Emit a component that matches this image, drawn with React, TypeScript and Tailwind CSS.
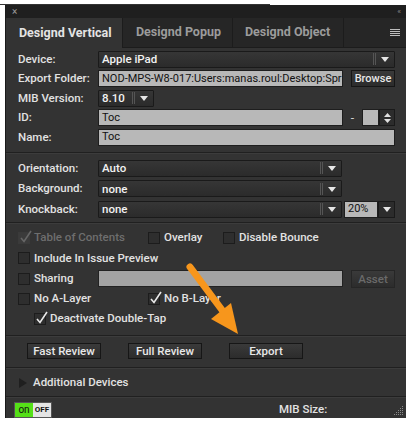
import React from 'react';

const font = { fontFamily: 'Roboto, "Liberation Sans", Arial, sans-serif' };

const Arrow: React.FC = () => (
    <svg width="10" height="8" viewBox="0 0 10 8" className="shrink-0">
        <path d="M1 2 L9 2 L5 7 Z" fill="#e6e6e6" />
    </svg>
);

const Select: React.FC<{ value: string; className?: string }> = ({ value, className = '' }) => (
    <div
        className={`flex items-center h-[17px] border border-[#1a1a1a] bg-gradient-to-b from-[#363636] to-[#2b2b2b] rounded-[1px] ${className}`}
    >
        <span className="flex-1 pl-[3px] text-[11.5px] font-medium text-[#f2f2f2] leading-[14px] truncate">{value}</span>
        <div className="flex items-center h-full pr-[4px]">
            <div className="w-[3px] h-[12px] border-l border-r border-[#555] mr-[4px]" />
            <Arrow />
        </div>
    </div>
);

const Input: React.FC<{ value?: string; className?: string }> = ({ value = '', className = '' }) => (
    <div
        className={`flex items-center h-[17px] border border-[#1e1e1e] bg-[#b8b8b8] pl-[3px] text-[11px] text-[#111] leading-[14px] overflow-hidden whitespace-nowrap ${className}`}
    >
        {value}
    </div>
);

const Check: React.FC<{ checked?: boolean; disabled?: boolean }> = ({ checked, disabled }) => (
    <div
        className={`relative w-[12px] h-[12px] border shrink-0 ${
            disabled ? 'border-[#3a3a3a] bg-[#3b3b3b]' : 'border-[#1c1c1c] bg-[#2e2e2e]'
        }`}
    >
        {checked && (
            <svg width="14" height="14" viewBox="0 0 14 14" className="absolute left-[0px] top-[-3px]">
                <path
                    d="M2 8 L5 11.5 L12 1"
                    fill="none"
                    stroke={disabled ? '#666' : '#e8e8e8'}
                    strokeWidth="1.6"
                />
            </svg>
        )}
    </div>
);

const CheckItem: React.FC<{ label: string; checked?: boolean; disabled?: boolean; className?: string }> = ({
    label,
    checked,
    disabled,
    className = ''
}) => (
    <div className={`flex items-center gap-[4px] ${className}`}>
        <Check checked={checked} disabled={disabled} />
        <span className={`text-[11.5px] font-medium leading-none ${disabled ? 'text-[#6e6e6e]' : 'text-[#e2e2e2]'}`}>
            {label}
        </span>
    </div>
);

const Button: React.FC<{ label: string; disabled?: boolean; className?: string }> = ({ label, disabled, className = '' }) => (
    <div
        className={`flex items-center justify-center h-[16px] border ${
            disabled ? 'border-[#262626] text-[#6a6a6a]' : 'border-[#161616] text-[#e8e8e8]'
        } bg-gradient-to-b from-[#3a3a3a] to-[#2c2c2c] text-[11.5px] font-medium leading-[14px] whitespace-nowrap ${className}`}
    >
        {label}
    </div>
);

const Row: React.FC<{ label?: string; h: string; children: React.ReactNode }> = ({ label, h, children }) => (
    <div className={`flex items-center ${h}`}>
        <span className="w-[80px] shrink-0 text-[11.5px] font-medium text-[#e2e2e2] leading-none">{label}</span>
        <div className="flex-1 flex items-center min-w-0">{children}</div>
    </div>
);

const Sep: React.FC = () => <div className="h-[1px] bg-[#202020] shadow-[0_1px_0_#3c3c3c]" />;

const App: React.FC = () => {
    return (
        <div className="relative w-[411px] h-[424px] bg-white overflow-hidden" style={font}>
            <div className="absolute left-0 top-[4px] w-[270px] h-[1px] bg-[#333]" />
            <div className="ml-[5px] pt-[5px] w-[401px]">
                <div className="flex flex-col h-[413px] bg-[#333333] border-l border-[#1a1a1a]">
                    {/* title bar */}
                    <div className="flex items-center justify-between h-[13px] bg-[#1f1f1f] px-[6px]">
                        <span className="text-[10px] text-[#9a9a9a] leading-none">×</span>
                        <span className="text-[8px] text-[#8a8a8a] leading-none tracking-[-1px]">&lsaquo;&lsaquo;</span>
                    </div>
                    {/* tabs */}
                    <div className="flex h-[30px] bg-[#262626]">
                        <div className="flex items-center w-[117px] bg-[#333333] pl-[13px] text-[12.5px] font-bold text-[#e4e4e4] border-r border-[#1c1c1c]">
                            Designd Vertical
                        </div>
                        <div className="flex items-center w-[110px] pl-[13px] text-[12.5px] font-bold text-[#9c9c9c] border-r border-[#1c1c1c] border-b border-b-[#1c1c1c]">
                            Designd Popup
                        </div>
                        <div className="flex items-center w-[111px] pl-[12px] text-[12.5px] font-bold text-[#9c9c9c] border-r border-[#1c1c1c] border-b border-b-[#1c1c1c]">
                            Designd Object
                        </div>
                        <div className="flex-1 flex items-center justify-end pr-[6px] border-b border-[#1c1c1c]">
                            <div className="flex flex-col gap-[1px] w-[10px]">
                                <div className="h-[1px] bg-[#bdbdbd]" />
                                <div className="h-[1px] bg-[#bdbdbd]" />
                                <div className="h-[1px] bg-[#bdbdbd]" />
                                <div className="h-[1px] bg-[#bdbdbd]" />
                            </div>
                        </div>
                    </div>

                    {/* section 1 */}
                    <div className="pl-[12px] pr-[11px] pt-[1.5px] pb-[5px]">
                        <Row label="Device:" h="h-[19.5px]">
                            <Select value="Apple iPad" className="flex-1" />
                        </Row>
                        <Row label="Export Folder:" h="h-[19.5px]">
                            <Input value="NOD-MPS-W8-017:Users:manas.roul:Desktop:Spr" className="flex-1" />
                            <Button label="Browse" className="w-[44px] ml-[8px] h-[17px] text-[11px]" />
                        </Row>
                        <Row label="MIB Version:" h="h-[19.5px]">
                            <Select value="8.10" className="w-[56px]" />
                        </Row>
                        <Row label="ID:" h="h-[19.5px]">
                            <Input value="Toc" className="flex-1" />
                            <span className="w-[19px] text-center text-[12px] text-[#cfcfcf] leading-none">-</span>
                            <Input className="w-[17px]" />
                            <div className="flex flex-col items-center justify-center gap-[2px] w-[16px] h-[17px] border border-[#1a1a1a] bg-[#2c2c2c]">
                                <svg width="7" height="4" viewBox="0 0 7 4"><path d="M0 4 L3.5 0 L7 4 Z" fill="#e0e0e0" /></svg>
                                <svg width="7" height="4" viewBox="0 0 7 4"><path d="M0 0 L7 0 L3.5 4 Z" fill="#e0e0e0" /></svg>
                            </div>
                        </Row>
                        <Row label="Name:" h="h-[19.5px]">
                            <Input value="Toc" className="flex-1" />
                        </Row>
                    </div>
                    <Sep />

                    {/* section 2 */}
                    <div className="pl-[12px] pr-[11px] pt-[5px] pb-[2.5px]">
                        <Row label="Orientation:" h="h-[20.5px]">
                            <Select value="Auto" className="w-[244px]" />
                        </Row>
                        <Row label="Background:" h="h-[20.5px]">
                            <Select value="none" className="w-[244px]" />
                        </Row>
                        <Row label="Knockback:" h="h-[20.5px]">
                            <Select value="none" className="w-[244px]" />
                            <Input value="20%" className="w-[34px] ml-[2px]" />
                            <div className="flex items-center justify-center w-[17px] h-[17px] border border-[#1a1a1a] bg-[#2c2c2c]">
                                <Arrow />
                            </div>
                        </Row>
                    </div>
                    <Sep />

                    {/* section 3 */}
                    <div className="pl-[12px] pr-[11px] pt-[5px] pb-[5.5px]">
                        <div className="flex items-center h-[20.25px]">
                            <CheckItem label="Table of Contents" checked disabled className="w-[130px]" />
                            <CheckItem label="Overlay" className="w-[75px]" />
                            <CheckItem label="Disable Bounce" />
                        </div>
                        <div className="flex items-center h-[20.25px]">
                            <CheckItem label="Include In Issue Preview" />
                        </div>
                        <div className="flex items-center h-[20.25px]">
                            <CheckItem label="Sharing" className="w-[80px]" />
                            <div className="w-[246px] h-[17px] bg-[#a3a3a3] border border-[#222]" />
                            <Button label="Asset" disabled className="w-[44px] ml-[8px] h-[18px]" />
                        </div>
                        <div className="flex items-center h-[20.25px]">
                            <CheckItem label="No A-Layer" className="w-[130px]" />
                            <CheckItem label="No B-Layer" checked />
                        </div>
                        <div className="flex items-center h-[20.25px] pl-[16px]">
                            <CheckItem label="Deactivate Double-Tap" checked />
                        </div>
                    </div>
                    <Sep />

                    {/* buttons */}
                    <div className="flex gap-[27px] pl-[21px] pt-[7px] pb-[8px]">
                        <Button label="Fast Review" className="w-[74px]" />
                        <Button label="Full Review" className="w-[74px]" />
                        <Button label="Export" className="w-[74px]" />
                    </div>
                    <Sep />

                    {/* additional devices */}
                    <div className="flex items-center h-[28px] pt-[2px] pl-[13px] gap-[6px]">
                        <svg width="8" height="10" viewBox="0 0 8 10"><path d="M0 0 L8 5 L0 10 Z" fill="#1f1f1f" /></svg>
                        <span className="text-[11.5px] font-medium text-[#e2e2e2] leading-none">Additional Devices</span>
                    </div>
                    <Sep />

                    {/* footer */}
                    <div className="relative flex items-center flex-1 pl-[8px] pt-[5px]">
                        <div className="flex h-[16px] border border-[#555]">
                            <div className="flex items-center justify-center w-[18px] bg-[#55e018] text-[10px] text-[#111] leading-none">on</div>
                            <div className="flex items-center justify-center w-[18px] bg-[#e4e4e4] text-[8px] font-bold text-[#111] leading-none">OFF</div>
                        </div>
                        <span className="ml-[227px] text-[11.5px] font-medium text-[#e2e2e2] leading-none">MIB Size:</span>
                        <svg width="10" height="10" viewBox="0 0 10 10" className="absolute right-[2px] bottom-[2px]">
                            <g fill="#8a8a8a">
                                <rect x="8" y="0" width="1" height="1" />
                                <rect x="6" y="2" width="1" height="1" />
                                <rect x="8" y="2" width="1" height="1" />
                                <rect x="4" y="4" width="1" height="1" />
                                <rect x="6" y="4" width="1" height="1" />
                                <rect x="8" y="4" width="1" height="1" />
                                <rect x="2" y="6" width="1" height="1" />
                                <rect x="4" y="6" width="1" height="1" />
                                <rect x="6" y="6" width="1" height="1" />
                                <rect x="8" y="6" width="1" height="1" />
                                <rect x="0" y="8" width="1" height="1" />
                                <rect x="2" y="8" width="1" height="1" />
                                <rect x="4" y="8" width="1" height="1" />
                                <rect x="6" y="8" width="1" height="1" />
                                <rect x="8" y="8" width="1" height="1" />
                            </g>
                        </svg>
                    </div>
                </div>
            </div>

            {/* annotation arrow */}
            <svg className="absolute left-0 top-0 pointer-events-none" width="411" height="424" viewBox="0 0 411 424">
                <line x1="190" y1="267" x2="222" y2="310" stroke="#f7961c" strokeWidth="7" strokeLinecap="round" />
                <path d="M211 319 L231 303 L238 334 Z" fill="#f7961c" />
            </svg>
        </div>
    );
};

export default App;
